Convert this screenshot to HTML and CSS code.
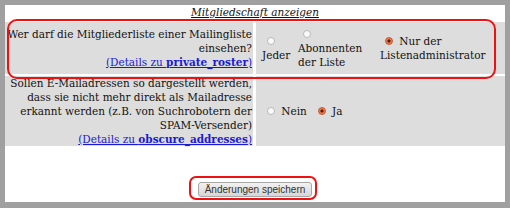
FILE: index.html
```html
<!DOCTYPE html>
<html lang="de">
<head>
    <meta charset="UTF-8">
    <title>Mitgliedschaft anzeigen</title>
    <link rel="stylesheet" href="styles.css">
</head>
<body>
    <div class="panel">
        <table class="options">
            <colgroup>
                <col class="col-question">
                <col>
            </colgroup>
            <tr>
                <th colspan="2" class="caption">Mitgliedschaft anzeigen</th>
            </tr>
            <tr class="row-roster">
                <td class="question">
                    Wer darf die Mitgliederliste einer Mailingliste einsehen?<br>
                    <a href="#">(Details zu <strong>private_roster</strong>)</a>
                </td>
                <td class="answer">
                    <div class="choices">
                        <label class="opt opt-anyone"><input type="radio" name="private_roster"> Jeder</label>
                        <label class="opt opt-members"><input type="radio" name="private_roster"> Abonnenten der Liste</label>
                        <label class="opt opt-admin"><input type="radio" name="private_roster" checked> Nur der Listenadministrator</label>
                    </div>
                </td>
            </tr>
            <tr class="row-obscure">
                <td class="question">
                    Sollen E-Mailadressen so dargestellt werden, dass sie nicht mehr direkt als Mailadresse erkannt werden (z.B. von Suchrobotern der SPAM-Versender)<br>
                    <a href="#">(Details zu <strong>obscure_addresses</strong>)</a>
                </td>
                <td class="answer">
                    <div class="choices">
                        <label class="opt"><input type="radio" name="obscure_addresses"> Nein</label>
                        <label class="opt"><input type="radio" name="obscure_addresses" checked> Ja</label>
                    </div>
                </td>
            </tr>
        </table>

        <div class="submit">
            <button type="button">Änderungen speichern</button>
        </div>

        <div class="mark mark-roster"></div>
        <div class="mark mark-submit"></div>
    </div>
</body>
</html>
```

FILE: styles.css
```css
html, body {
    margin: 0;
    height: 100%;
}
body {
    background: #a0a0a0;
    font-family: 'DejaVu Serif Condensed', 'DejaVu Serif', serif;
    font-stretch: condensed;
    font-size: 11.65px;
    line-height: 14px;
    color: #111;
    padding: 5px 5px 6px 5px;
    box-sizing: border-box;
}
.panel {
    position: relative;
    background: white;
    height: 197px;
    overflow: hidden;
}
.options {
    border-collapse: separate;
    border-spacing: 3px 2px;
    table-layout: fixed;
    width: calc(100% + 6px);
    margin: -2px -3px 0 -3px;
}
.col-question {
    width: 248px;
}
.caption {
    font-weight: normal;
    font-style: italic;
    text-decoration: underline;
    padding: 0;
    height: 15px;
    line-height: 15px;
}
td {
    background: #dddddd;
    padding: 0;
    vertical-align: middle;
}
.question {
    text-align: right;
    padding: 0 1px 0 0;
}
.row-roster td {
    height: 52px;
}
a {
    color: #1a1ad6;
}
.answer {
    padding-left: 6px;
}
.choices {
    display: flex;
    align-items: center;
}
.opt {
    display: block;
    margin-right: 6px;
}
.opt-anyone {
    width: 30px;
}
.opt-members {
    width: 70px;
    margin-right: 12px;
}
.opt-admin {
    width: 110px;
}
.opt-members input {
    margin-top: 1px;
}
input[type=radio] {
    appearance: none;
    -webkit-appearance: none;
    width: 8px;
    height: 8px;
    margin: 3px 3px 0 5px;
    border: 1px solid #b8b8b8;
    border-radius: 50%;
    background: #fafafa;
    box-sizing: border-box;
    vertical-align: baseline;
}
input[type=radio]:checked {
    border-color: #c8562c;
    background: radial-gradient(circle, #4a1e08 0 1.3px, #ec7a4c 1.8px);
}
.submit {
    text-align: center;
    padding-top: 34px;
}
button {
    font-family: 'Liberation Sans', sans-serif;
    font-size: 10px;
    color: #333;
    height: 15px;
    padding: 0 6px;
    line-height: 13px;
    border: 1px solid #a8a8a8;
    border-radius: 3px;
    background: linear-gradient(#f2f2f2, #d6d6d6);
}
.mark {
    position: absolute;
    border: 2px solid #ee1111;
    border-radius: 10px;
    box-sizing: border-box;
}
.mark-roster {
    left: 2px;
    top: 14px;
    width: 489px;
    height: 60px;
}
.mark-submit {
    left: 184px;
    top: 171px;
    width: 128px;
    height: 24px;
    border-radius: 7px;
}
```
